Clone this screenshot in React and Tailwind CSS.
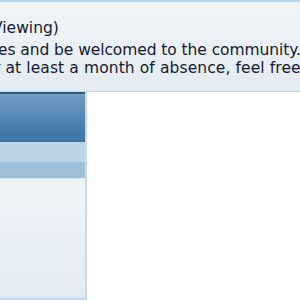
export default function App() {
  return (
    <div className="w-[300px] h-[300px] overflow-hidden bg-white flex flex-col" style={{ fontFamily: '"DejaVu Sans", Verdana, sans-serif' }}>
      <div className="h-[92px] shrink-0 border-t-2 border-b border-t-[#c1d8ec] border-b-[#c3d5e4] bg-gradient-to-b from-[#f1f5f9] to-[#e3ebf2] overflow-hidden text-[15.5px] text-[#161a30] whitespace-nowrap">
        <div className="mt-[17px] leading-[18px] -ml-[14px]">(Viewing)</div>
        <div className="mt-[4px] leading-[18px] -ml-[2px] tracking-[-0.08px]">es and be welcomed to the community. I</div>
        <div className="leading-[18px] -ml-[6px] tracking-[0.1px]">r at least a month of absence, feel free</div>
      </div>
      <div className="flex flex-1 min-h-0">
        <div className="w-[87px] shrink-0 flex flex-col border-r-2 border-r-[#c4dbee]">
          <div className="h-[2px] bg-[#2c5b80]" />
          <div className="h-[48px] bg-gradient-to-b from-[#6f9cc3] to-[#3b73a3]" />
          <div className="h-[20px] bg-[#bbd4e8]" />
          <div className="h-[17px] bg-[#9ec0da] border-b border-b-[#d9e6f0]" />
          <div className="flex-1 bg-gradient-to-b from-[#eff4f8] to-[#e3ebf2] border-b-2 border-b-[#c3d8ea]" />
        </div>
        <div className="flex-1 bg-white" />
      </div>
    </div>
  );
}
